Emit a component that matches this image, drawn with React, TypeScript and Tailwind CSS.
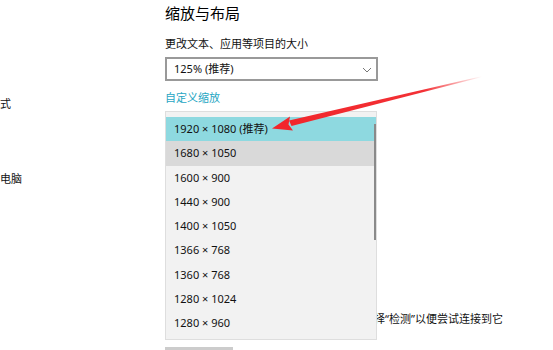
import React from "react";

const items = [
  "1920 × 1080 (推荐)",
  "1680 × 1050",
  "1600 × 900",
  "1440 × 900",
  "1400 × 1050",
  "1366 × 768",
  "1360 × 768",
  "1280 × 1024",
  "1280 × 960",
];

const font = { fontFamily: '"Noto Sans", "Noto Sans CJK SC", sans-serif' };

export default function App() {
  return (
    <div
      className="relative w-[553px] h-[350px] bg-white overflow-hidden text-[#111111]"
      style={font}
    >
      <div className="flex">
        {/* left column */}
        <div className="w-[165px] shrink-0 relative">
          <div className="ml-0 mt-[96px] text-[11px] leading-[16px]">式</div>
          <div className="ml-0 mt-[59px] text-[11px] leading-[16px]">电脑</div>
        </div>
        {/* main column */}
        <div className="flex flex-col">
          <div className="mt-[3px] text-[15px] leading-[20px] text-black">缩放与布局</div>
          <div className="mt-[13px] text-[11px] leading-[16px]">更改文本、应用等项目的大小</div>
          <div className="mt-[5px] w-[213px] h-[24px] border-2 border-[#999999] flex items-center justify-between pl-[7px] pr-[4px]">
            <span className="text-[11px] leading-[16px]">125% (推荐)</span>
            <svg width="10" height="6" viewBox="0 0 10 6" className="mt-[1px]">
              <path d="M1 1 L5 5 L9 1" fill="none" stroke="#777" strokeWidth="1" />
            </svg>
          </div>
          <div className="mt-[9px] text-[11px] leading-[16px] text-[#27a6c3]">自定义缩放</div>
          <div className="mt-[205px] w-[338px] flex justify-end text-[11px] leading-[16px]">
            如果未列出，请选择“检测”以便尝试连接到它
          </div>
          <div className="mt-[20px] w-[68px] h-[4px] bg-[#cccccc]" />
        </div>
      </div>

      {/* dropdown popup */}
      <div className="absolute left-[165px] top-[111px] w-[212px] h-[229px] bg-[#f2f2f2] border border-[#dedede] pt-[5px]">
        {items.map((t, i) => (
          <div
            key={t}
            className={
              "h-[24.25px] flex items-center pl-[8px] text-[11px] leading-[16px] " +
              (i === 0 ? "bg-[#8ed9e0]" : i === 1 ? "bg-[#d9d9d9]" : "")
            }
          >
            {t}
          </div>
        ))}
        <div className="absolute left-[208px] top-[12px] w-[2px] h-[116px] bg-[#8a8a8a]" />
      </div>

      {/* red arrow */}
      <svg className="absolute left-0 top-0 pointer-events-none" width="553" height="350">
        <defs>
          <linearGradient id="fade" x1="290" y1="123" x2="482" y2="76" gradientUnits="userSpaceOnUse">
            <stop offset="0" stopColor="#f2262b" stopOpacity="1" />
            <stop offset="0.7" stopColor="#f2262b" stopOpacity="0.95" />
            <stop offset="1" stopColor="#f2262b" stopOpacity="0" />
          </linearGradient>
        </defs>
        <polygon points="289,120.5 291.5,126 482,77 481.5,76.2" fill="url(#fade)" />
        <polygon points="272,128.5 290,116.5 288.5,124.5 293,130.5" fill="#f2262b" />
      </svg>
    </div>
  );
}
